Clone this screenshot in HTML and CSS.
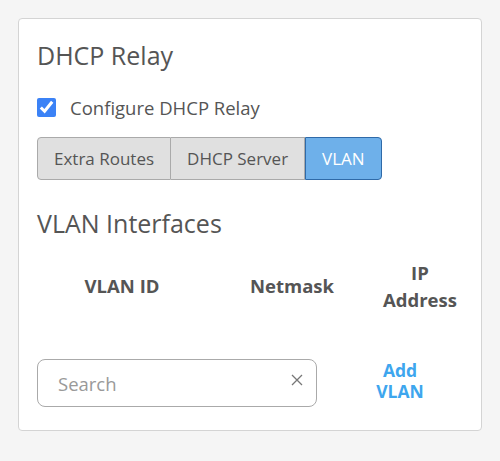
FILE: index.html
```html
<!doctype html>
<html lang="en">
<head>
  <meta charset="utf-8">
  <title>DHCP Relay</title>
  <link rel="stylesheet" href="styles.css">
</head>
<body>
  <div class="panel">
    <h2 class="panel-title">DHCP Relay</h2>
    <label class="check-row">
      <input type="checkbox" checked>
      <span>Configure DHCP Relay</span>
    </label>
    <div class="tabs">
      <button class="tab">Extra Routes</button>
      <button class="tab">DHCP Server</button>
      <button class="tab active">VLAN</button>
    </div>
    <h2 class="section-title">VLAN Interfaces</h2>
    <div class="vlan-table">
      <div class="th">VLAN ID</div>
      <div class="th">Netmask</div>
      <div class="th">IP Address</div>
    </div>
    <div class="search-row">
      <div class="search-box">
        <input type="text" placeholder="Search">
        <span class="clear">
          <svg width="12" height="12" viewBox="0 0 12 12"><path d="M1 1L11 11M11 1L1 11" stroke="#777" stroke-width="1.3" fill="none"/></svg>
        </span>
      </div>
      <a href="#" class="add-link">Add VLAN</a>
    </div>
  </div>
</body>
</html>
```

FILE: styles.css
```css
html, body {
  margin: 0;
  padding: 0;
  background: #f5f5f5;
}
body {
  font-family: 'Open Sans', Arial, sans-serif;
  color: #555;
  padding: 18px 0 0 18px;
}
.panel {
  box-sizing: border-box;
  width: 464px;
  height: 413px;
  background: #fff;
  border: 1px solid #d4d4d4;
  border-radius: 4px;
  padding: 20px 19px 20px 18px;
}
.panel-title {
  font-size: 25px;
  font-weight: normal;
  color: #555;
  margin: 0;
  line-height: 32px;
}
.check-row {
  display: flex;
  align-items: center;
  margin-top: 24px;
  height: 24px;
  font-size: 18.5px;
  color: #555;
}
.check-row input {
  width: 19px;
  height: 19px;
  margin: 0 14px 0 0;
  accent-color: #3b82f6;
}
.tabs {
  display: flex;
  margin-top: 18px;
}
.tab {
  font-family: inherit;
  font-size: 17px;
  color: #555;
  background: #e0e0e0;
  border: 1px solid #aaa;
  height: 43px;
  padding: 0 16px;
  margin: 0;
  cursor: pointer;
}
.tab:first-child {
  border-radius: 4px 0 0 4px;
}
.tab + .tab {
  border-left: none;
}
.tab.active {
  background: #6eb0ea;
  color: #fff;
  border: 1px solid #2f6aa8;
  border-radius: 0 4px 4px 0;
  padding: 0 16px;
}
.section-title {
  font-size: 25px;
  font-weight: normal;
  color: #555;
  margin: 27px 0 0 0;
  line-height: 32px;
}
.vlan-table {
  display: grid;
  grid-template-columns: 170px 170px 1fr;
  align-items: center;
  margin-top: 10px;
  height: 73px;
}
.th {
  text-align: center;
  font-weight: bold;
  font-size: 18.5px;
  line-height: 27px;
  color: #555;
  padding: 0 6px;
}
.search-row {
  display: flex;
  align-items: flex-start;
  margin-top: 37px;
}
.search-box {
  position: relative;
  width: 280px;
}
.search-box input {
  display: block;
  width: 100%;
  height: 48px;
  box-sizing: border-box;
  border: 1px solid #aaa;
  border-radius: 8px;
  padding: 0 40px 0 20px;
  font-family: inherit;
  font-size: 18.5px;
  color: #555;
  outline: none;
}
.search-box input::placeholder {
  color: #999;
}
.clear {
  position: absolute;
  right: 14px;
  top: 15px;
  line-height: 0;
}
.add-link {
  width: 60px;
  margin-left: 53px;
  padding-top: 1px;
  text-align: center;
  color: #3ea6ee;
  font-weight: bold;
  font-size: 17.5px;
  line-height: 21px;
  text-decoration: none;
}
```
